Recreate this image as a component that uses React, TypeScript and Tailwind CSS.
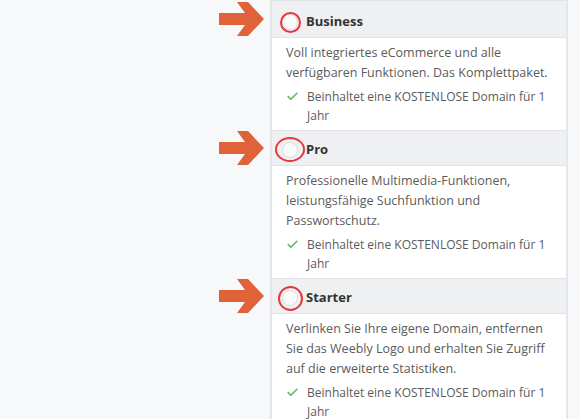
import { Check } from "lucide-react";

const plans = [
  {
    name: "Business",
    text: "Voll integriertes eCommerce und alle verfügbaren Funktionen. Das Komplettpaket.",
    ring: "left-[-3px] top-[-3px] h-[21px] w-[21px]",
    head: "h-[38px] pt-[5px]",
  },
  {
    name: "Pro",
    text: "Professionelle Multimedia-Funktionen, leistungsfähige Suchfunktion und Passwortschutz.",
    ring: "left-[-8px] top-[-6px] h-[25px] w-[30px]",
    head: "h-[36px] pt-[3px]",
  },
  {
    name: "Starter",
    text: "Verlinken Sie Ihre eigene Domain, entfernen Sie das Weebly Logo und erhalten Sie Zugriff auf die erweiterte Statistiken.",
    ring: "left-[-5px] top-[-5px] h-[25px] w-[25px]",
    head: "h-[36px] pt-[3px]",
  },
];

const Arrow = () => (
  <svg
    width="46"
    height="36"
    viewBox="0 0 46 36"
    className="absolute right-[calc(100%+7px)] top-1/2 -translate-y-1/2"
  >
    <path d="M0 12 H26 L18 1 H29 L45 18 L29 35 H18 L26 24 H0 Z" fill="#df6238" />
  </svg>
);

const App = () => {
  return (
    <main
      className="h-[419px] w-[580px] overflow-hidden bg-[#f7f8fa] pl-[270px]"
      style={{ fontFamily: '"Open Sans", "Liberation Sans", sans-serif' }}
    >
      <div className="w-[298px] border-x-2 border-[#e4e6e9] bg-white">
        {plans.map((plan) => (
          <section key={plan.name}>
            <div
              className={`relative flex items-center gap-[8px] border-y border-[#e1e3e6] bg-[#eff0f2] pl-[10px] ${plan.head}`}
            >
              <Arrow />
              <span className="relative h-[16px] w-[16px] shrink-0 rounded-full border border-[#dcdee2] bg-[#fafafb]">
                <span className={`absolute rounded-[50%] border-2 border-[#e5383f] ${plan.ring}`} />
              </span>
              <span className="text-[13px] font-bold text-[#333]">{plan.name}</span>
            </div>
            <div className="px-[14px] pb-[5px] pt-[5px] text-[12.5px] text-[#5b5b5b]">
              <p className="leading-[20px]">{plan.text}</p>
              <div className="mt-[4px] flex gap-[8px] text-[12px] leading-[19px]">
                <Check size={13} strokeWidth={3} className="mt-[3px] shrink-0 text-[#5cb85c]" />
                <span>Beinhaltet eine KOSTENLOSE Domain für 1 Jahr</span>
              </div>
            </div>
          </section>
        ))}
      </div>
    </main>
  );
};

export default App;
